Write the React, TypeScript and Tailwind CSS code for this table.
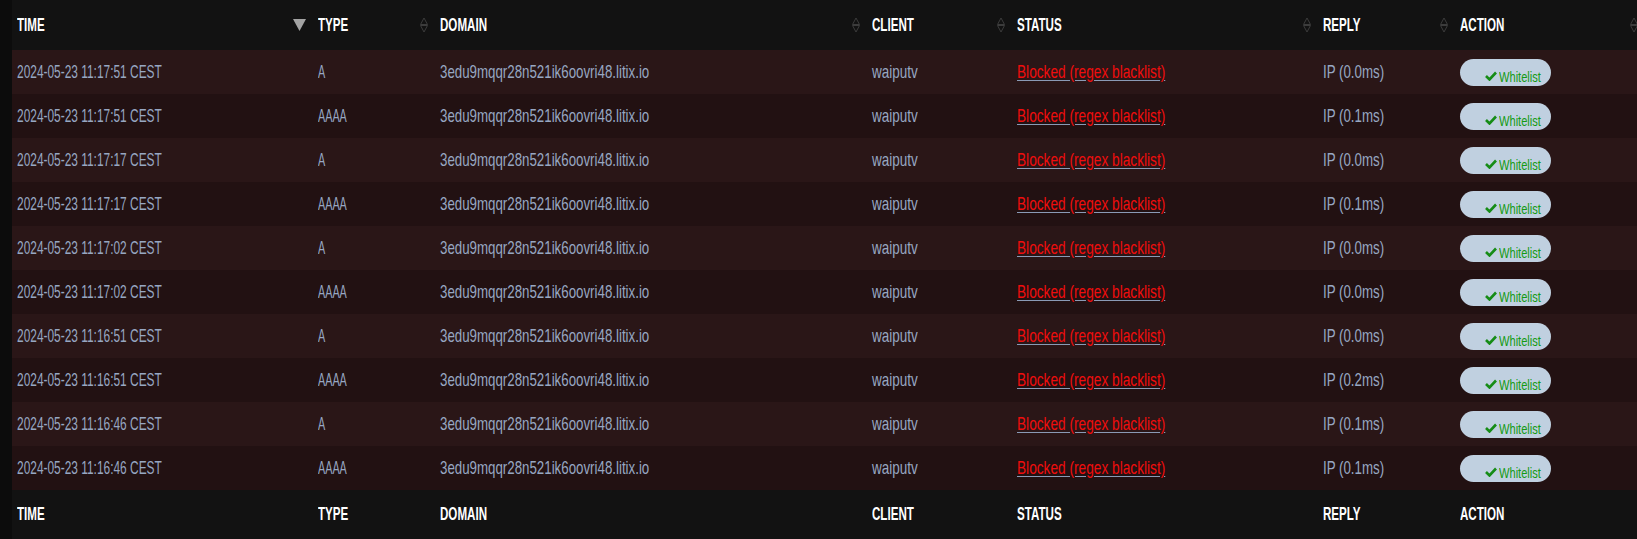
import React from 'react';

type Row = {
  time: string;
  type: string;
  reply: string;
};

const rows: Row[] = [
  { time: '2024-05-23 11:17:51 CEST', type: 'A', reply: '0.0' },
  { time: '2024-05-23 11:17:51 CEST', type: 'AAAA', reply: '0.1' },
  { time: '2024-05-23 11:17:17 CEST', type: 'A', reply: '0.0' },
  { time: '2024-05-23 11:17:17 CEST', type: 'AAAA', reply: '0.1' },
  { time: '2024-05-23 11:17:02 CEST', type: 'A', reply: '0.0' },
  { time: '2024-05-23 11:17:02 CEST', type: 'AAAA', reply: '0.0' },
  { time: '2024-05-23 11:16:51 CEST', type: 'A', reply: '0.0' },
  { time: '2024-05-23 11:16:51 CEST', type: 'AAAA', reply: '0.2' },
  { time: '2024-05-23 11:16:46 CEST', type: 'A', reply: '0.1' },
  { time: '2024-05-23 11:16:46 CEST', type: 'AAAA', reply: '0.1' },
];

const columns = ['TIME', 'TYPE', 'DOMAIN', 'CLIENT', 'STATUS', 'REPLY', 'ACTION'];

const gridCols = 'grid grid-cols-[301px_122px_432px_145px_306px_137px_190px]';

// both arrows, nothing sorted on this column
function SortBoth() {
  return (
    <svg width="8" height="16" viewBox="0 0 8 16" fill="none" stroke="#3c3c3c" strokeWidth="1">
      <path d="M4 1 L7.5 7.5 H0.5 Z" />
      <path d="M0.5 8.5 H7.5 L4 15 Z" />
    </svg>
  );
}

// active sort, descending
function SortDesc() {
  return (
    <svg width="13" height="12" viewBox="0 0 13 12">
      <path d="M0 0 H13 L6.5 12 Z" fill="#a3a3a3" />
    </svg>
  );
}

function HeaderRow({ sortable }: { sortable: boolean }) {
  return (
    <div className={`${gridCols} ${sortable ? 'h-[50px]' : 'h-[49px]'}`}>
      {columns.map((col, i) => (
        <div key={col} className="flex items-center justify-between pl-[5px] pr-[7px]">
          <span className="inline-block origin-left scale-x-[0.61] text-[19px] font-bold text-white">
            {col}
          </span>
          {sortable && (i === 0 ? <SortDesc /> : <SortBoth />)}
        </div>
      ))}
    </div>
  );
}

function WhitelistButton() {
  return (
    <button className="flex h-[27px] w-[91px] items-center overflow-hidden rounded-full bg-[#c0d0e0] pl-[25px] pt-[8px]">
      <svg
        className="shrink-0"
        width="12"
        height="10"
        viewBox="0 0 12 10"
        fill="none"
        stroke="#168c16"
        strokeWidth="2.6"
      >
        <path d="M1 5 L4.5 8.5 L11 1.5" />
      </svg>
      <span className="ml-[2px] inline-block shrink-0 origin-left scale-x-[0.74] text-[15px] leading-none text-[#139b13]">
        Whitelist
      </span>
    </button>
  );
}

export default function App() {
  return (
    <div className="h-[539px] w-full overflow-hidden bg-[#0c0c0c] pl-3 font-['Liberation_Sans',Arial,sans-serif]">
      <div className="w-[1633px] bg-[#121212]">
        <HeaderRow sortable />

        {rows.map((row, i) => (
          <div
            key={i}
            className={`${gridCols} h-[44px] text-[19px] text-[#97a7c2] ${
              i % 2 === 0 ? 'bg-[#2a1617]' : 'bg-[#221112]'
            }`}
          >
            <div className="flex items-center pl-[5px]">
              <span className="inline-block origin-left scale-x-[0.627]">{row.time}</span>
            </div>
            <div className="flex items-center pl-[5px]">
              <span className="inline-block origin-left scale-x-[0.568]">{row.type}</span>
            </div>
            <div className="flex items-center pl-[5px]">
              <span className="inline-block origin-left scale-x-[0.70]">3edu9mqqr28n521ik6oovri48.litix.io</span>
            </div>
            <div className="flex items-center pl-[5px]">
              <span className="inline-block origin-left scale-x-[0.71]">waiputv</span>
            </div>
            <div className="flex items-center pl-[5px]">
              <a
                href="#"
                className="inline-block origin-left scale-x-[0.72] text-[#f00d0d] underline decoration-[#8a9ab5] underline-offset-2"
              >
                Blocked (regex blacklist)
              </a>
            </div>
            <div className="flex items-center pl-[5px]">
              <span className="inline-block origin-left scale-x-[0.70]">IP ({row.reply}ms)</span>
            </div>
            <div className="flex items-center pl-[5px]">
              <WhitelistButton />
            </div>
          </div>
        ))}

        <HeaderRow sortable={false} />
      </div>
    </div>
  );
}
